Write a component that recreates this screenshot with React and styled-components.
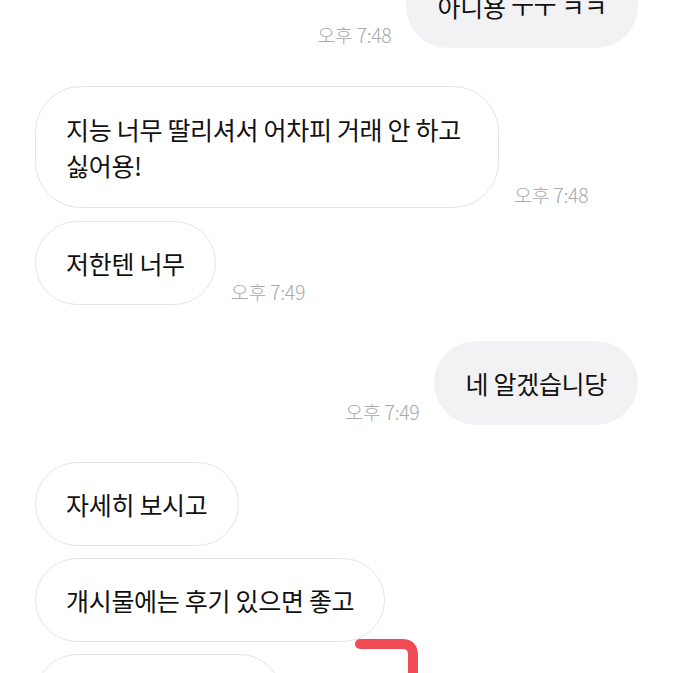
import React from "react";
import styled, { createGlobalStyle } from "styled-components";

const Global = createGlobalStyle`
  html, body { margin: 0; padding: 0; background: #ffffff; }
  body { font-family: "Noto Sans CJK KR", "Noto Sans", sans-serif; overflow: hidden; }
`;

const Screen = styled.div`
  position: relative;
  width: 673px;
  height: 673px;
  overflow: hidden;
  background: #fff;
`;

const List = styled.div`
  display: flex;
  flex-direction: column;
  padding: 0 35px;
  margin-top: -36px;
`;

const Row = styled.div`
  display: flex;
  align-items: flex-end;
  gap: 15px;
  flex-direction: ${(p) => (p.$mine ? "row-reverse" : "row")};
  margin-top: ${(p) => p.$gap}px;
`;

const Bubble = styled.div`
  box-sizing: border-box;
  max-width: 464px;
  padding: ${(p) => (p.$mine ? "24px 31px" : p.$tall ? "24px 30px" : "23px 30px")};
  border-radius: ${(p) => (p.$tall ? "46px" : "42px")};
  background: ${(p) => (p.$mine ? "#f2f2f4" : "#ffffff")};
  border: ${(p) => (p.$mine ? "none" : "1px solid #e4e4e6")};
  color: #111;
  font-size: 25px;
  line-height: 36px;
  letter-spacing: -0.3px;
  word-break: keep-all;
`;

const Time = styled.span`
  flex: none;
  font-size: 19.5px;
  font-weight: 300;
  line-height: 22px;
  color: #a9a9ad;
  margin-bottom: 2px;
  letter-spacing: -0.3px;
`;

const Hook = styled.svg`
  position: absolute;
  left: 350px;
  top: 636px;
  width: 80px;
  height: 40px;
`;

const messages = [
  { mine: true, text: "아니용 ㅜㅜ ㅋㅋ", time: "오후 7:48", gap: 0 },
  { mine: false, text: "지능 너무 딸리셔서 어차피 거래 안 하고 싫어용!", time: "오후 7:48", gap: 38, tall: true },
  { mine: false, text: "저한텐 너무", time: "오후 7:49", gap: 13 },
  { mine: true, text: "네 알겠습니당", time: "오후 7:49", gap: 36 },
  { mine: false, text: "자세히 보시고", gap: 37 },
  { mine: false, text: "개시물에는 후기 있으면 좋고", gap: 12 },
  { mine: false, text: "\u00a0", gap: 12, w: 247 },
];

export default function App() {
  return (
    <Screen>
      <Global />
      <List>
        {messages.map((m, i) => (
          <Row key={i} $mine={m.mine} $gap={m.gap}>
            <Bubble $mine={m.mine} $tall={m.tall} style={m.w ? { width: m.w } : undefined}>
              {m.text}
            </Bubble>
            {m.time && <Time>{m.time}</Time>}
          </Row>
        ))}
      </List>
      <Hook viewBox="0 0 80 40">
        <path d="M10 8 H52 Q63 8 63 19 V40" fill="none" stroke="#f04b55" strokeWidth="10" strokeLinecap="round" />
      </Hook>
    </Screen>
  );
}
